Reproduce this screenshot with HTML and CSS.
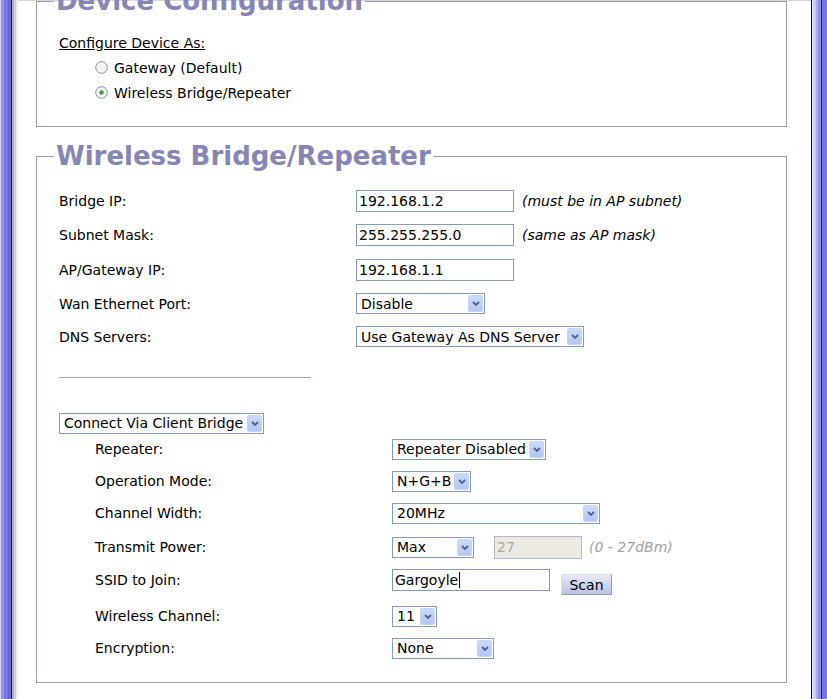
FILE: index.html
```html
<!DOCTYPE html>
<html>
<head>
<meta charset="utf-8">
<title>Device Configuration</title>
<link rel="stylesheet" href="styles.css">
</head>
<body>
<div class="frame">
  <div class="stripe-left"></div>
  <main class="content">
    <fieldset class="box box-first">
      <legend class="box-title">Device Configuration</legend>
      <div class="box-body first-body">
        <div class="line"><span class="ul">Configure Device As:</span></div>
        <div class="line radio-line">
          <svg class="radio" width="13" height="13" viewBox="0 0 13 13"><circle cx="6.5" cy="6.5" r="5.8" fill="#f4f4f0" stroke="#7d90ab" stroke-width="1"/></svg>
          <span>Gateway (Default)</span>
        </div>
        <div class="line radio-line">
          <svg class="radio" width="13" height="13" viewBox="0 0 13 13"><circle cx="6.5" cy="6.5" r="5.8" fill="#f4f4f0" stroke="#7d90ab" stroke-width="1"/><circle cx="6.5" cy="6.5" r="2.3" fill="#3a9d3a"/></svg>
          <span>Wireless Bridge/Repeater</span>
        </div>
      </div>
    </fieldset>

    <fieldset class="box box-second">
      <legend class="box-title">Wireless Bridge/Repeater</legend>
      <div class="box-body second-body">
        <div class="row h34">
          <span class="lbl">Bridge IP:</span>
          <span class="txt w158">192.168.1.2</span>
          <span class="note">(must be in AP subnet)</span>
        </div>
        <div class="row h34">
          <span class="lbl">Subnet Mask:</span>
          <span class="txt w158">255.255.255.0</span>
          <span class="note">(same as AP mask)</span>
        </div>
        <div class="row h35">
          <span class="lbl">AP/Gateway IP:</span>
          <span class="txt w158">192.168.1.1</span>
        </div>
        <div class="row h33">
          <span class="lbl">Wan Ethernet Port:</span>
          <span class="sel w129"><span class="val">Disable</span><span class="arr"><svg width="8" height="5" viewBox="0 0 8 5"><path d="M1 1 L4 4 L7 1" fill="none" stroke="#4d6185" stroke-width="1.8"/></svg></span></span>
        </div>
        <div class="row h33">
          <span class="lbl">DNS Servers:</span>
          <span class="sel w228"><span class="val">Use Gateway As DNS Server</span><span class="arr"><svg width="8" height="5" viewBox="0 0 8 5"><path d="M1 1 L4 4 L7 1" fill="none" stroke="#4d6185" stroke-width="1.8"/></svg></span></span>
        </div>

        <div class="sep"></div>

        <div class="row connect-row">
          <span class="sel w205"><span class="val">Connect Via Client Bridge</span><span class="arr"><svg width="8" height="5" viewBox="0 0 8 5"><path d="M1 1 L4 4 L7 1" fill="none" stroke="#4d6185" stroke-width="1.8"/></svg></span></span>
        </div>

        <div class="sub">
          <div class="row h32">
            <span class="lbl">Repeater:</span>
            <span class="sel w154"><span class="val">Repeater Disabled</span><span class="arr"><svg width="8" height="5" viewBox="0 0 8 5"><path d="M1 1 L4 4 L7 1" fill="none" stroke="#4d6185" stroke-width="1.8"/></svg></span></span>
          </div>
          <div class="row h32">
            <span class="lbl">Operation Mode:</span>
            <span class="sel w79"><span class="val">N+G+B</span><span class="arr"><svg width="8" height="5" viewBox="0 0 8 5"><path d="M1 1 L4 4 L7 1" fill="none" stroke="#4d6185" stroke-width="1.8"/></svg></span></span>
          </div>
          <div class="row h32">
            <span class="lbl">Channel Width:</span>
            <span class="sel w208"><span class="val">20MHz</span><span class="arr"><svg width="8" height="5" viewBox="0 0 8 5"><path d="M1 1 L4 4 L7 1" fill="none" stroke="#4d6185" stroke-width="1.8"/></svg></span></span>
          </div>
          <div class="row h36">
            <span class="lbl">Transmit Power:</span>
            <span class="sel w82"><span class="val">Max</span><span class="arr"><svg width="8" height="5" viewBox="0 0 8 5"><path d="M1 1 L4 4 L7 1" fill="none" stroke="#4d6185" stroke-width="1.8"/></svg></span></span>
            <span class="txt txt-off w88">27</span>
            <span class="note note-off">(0 - 27dBm)</span>
          </div>
          <div class="row h30">
            <span class="lbl">SSID to Join:</span>
            <span class="txt w158">Gargoyle<span class="caret"></span></span>
            <span class="btn">Scan</span>
          </div>
          <div class="row h42">
            <span class="lbl">Wireless Channel:</span>
            <span class="sel w45"><span class="val">11</span><span class="arr"><svg width="8" height="5" viewBox="0 0 8 5"><path d="M1 1 L4 4 L7 1" fill="none" stroke="#4d6185" stroke-width="1.8"/></svg></span></span>
          </div>
          <div class="row h22">
            <span class="lbl">Encryption:</span>
            <span class="sel w102"><span class="val">None</span><span class="arr"><svg width="8" height="5" viewBox="0 0 8 5"><path d="M1 1 L4 4 L7 1" fill="none" stroke="#4d6185" stroke-width="1.8"/></svg></span></span>
          </div>
        </div>
      </div>
    </fieldset>
  </main>
  <div class="stripe-right"></div>
</div>
</body>
</html>
```
FILE: styles.css
```css
* { box-sizing: border-box; }

html, body {
  margin: 0;
  padding: 0;
  background: #ffffff;
}

body {
  font-family: "DejaVu Sans", Verdana, sans-serif;
  font-size: 14px;
  color: #000000;
}

.frame {
  display: flex;
  width: 827px;
  height: 699px;
  overflow: hidden;
}

.stripe-left {
  flex: none;
  width: 18px;
  background: linear-gradient(to right,
    #d4d4fa 0, #d4d4fa 1px,
    #9494ec 1px, #9494ec 4px,
    #7676de 4px, #7676de 8px,
    #6868d0 8px, #6868d0 11px,
    #1c1c44 11px, #1c1c44 12px,
    #b0b0b0 12px, #b0b0b0 14px,
    #d2d2d2 14px, #d2d2d2 16px,
    #ececec 16px, #ececec 18px);
}

.stripe-right {
  flex: none;
  width: 16px;
  background: linear-gradient(to right,
    #101018 0, #101018 1px,
    #dedef8 1px, #dedef8 3px,
    #c8c8f4 3px, #c8c8f4 5px,
    #acacee 5px, #acacee 7px,
    #9090e6 7px, #9090e6 10px,
    #22224e 10px, #22224e 11px,
    #7676e0 11px, #7676e0 16px);
}

.content {
  flex: 1;
  border-top: 1px solid #d4d4dc;
}

.box {
  margin: 0 24px 0 18px;
  padding: 0;
  border: 1px solid #9c9bb4;
  min-width: 0;
}

.box-first {
  margin-top: -15px;
}

.box-second {
  margin-top: 14px;
}

.box-title {
  margin-left: 17px;
  padding: 0 2px;
  font-size: 26px;
  font-weight: bold;
  line-height: 30px;
  color: #8686b6;
}

.first-body {
  padding: 14px 0 21px 22px;
}

.line {
  display: flex;
  align-items: center;
  height: 25px;
}

.ul {
  text-decoration: underline;
}

.radio-line {
  padding-left: 36px;
  gap: 6px;
}

.radio {
  flex: none;
  display: block;
}

.second-body {
  padding: 13px 0 23px 22px;
}

.row {
  display: flex;
  align-items: center;
}

.h22 { height: 22px; }
.h30 { height: 30px; }
.h32 { height: 32px; }
.h33 { height: 33px; }
.h34 { height: 34px; }
.h35 { height: 35px; }
.h36 { height: 36px; }
.h42 { height: 42px; }

.lbl {
  flex: none;
  width: 297px;
}

.txt {
  flex: none;
  display: flex;
  align-items: center;
  height: 22px;
  padding-left: 2px;
  border: 1px solid #7f9db9;
  background: #ffffff;
  white-space: nowrap;
}

.txt-off {
  height: 23px;
  margin-left: 20px;
  background: #ebebe4;
  border-color: #b3b8c4;
  color: #aca899;
}

.caret {
  display: inline-block;
  width: 1px;
  height: 16px;
  background: #000000;
  margin-left: 1px;
}

.note {
  margin-left: 8px;
  font-style: italic;
  white-space: nowrap;
}

.note-off {
  margin-left: 7px;
  color: #a0a0a0;
}

.sel {
  flex: none;
  display: flex;
  align-items: center;
  height: 21px;
  padding-left: 4px;
  border: 1px solid #7f9db9;
  background: #ffffff;
  white-space: nowrap;
}

.val {
  flex: 1;
  overflow: hidden;
}

.arr {
  flex: none;
  display: flex;
  align-items: center;
  justify-content: center;
  width: 15px;
  height: 17px;
  margin: 0 1px 0 2px;
  border: 1px solid #c6d4f8;
  border-radius: 2px;
  background: linear-gradient(#cbdafc, #b4c7f4);
}

.arr svg { display: block; }

.w45 { width: 45px; }
.w79 { width: 79px; }
.w82 { width: 82px; }
.w88 { width: 88px; }
.w102 { width: 102px; }
.w129 { width: 129px; }
.w154 { width: 154px; }
.w158 { width: 158px; }
.w205 { width: 205px; }
.w208 { width: 208px; }
.w228 { width: 228px; }

.sep {
  width: 252px;
  height: 1px;
  margin-top: 24px;
  background: #a4a4b4;
}

.connect-row {
  height: 20px;
  margin-top: 35px;
}

.sub {
  padding-left: 36px;
}

.btn {
  flex: none;
  display: flex;
  align-items: center;
  justify-content: center;
  width: 51px;
  height: 21px;
  margin-left: 11px;
  margin-top: 9px;
  border: 1px solid;
  border-color: #d6dbef #949cba #949cba #d6dbef;
  background: linear-gradient(#e6eaf8, #bac3e4);
}
```
